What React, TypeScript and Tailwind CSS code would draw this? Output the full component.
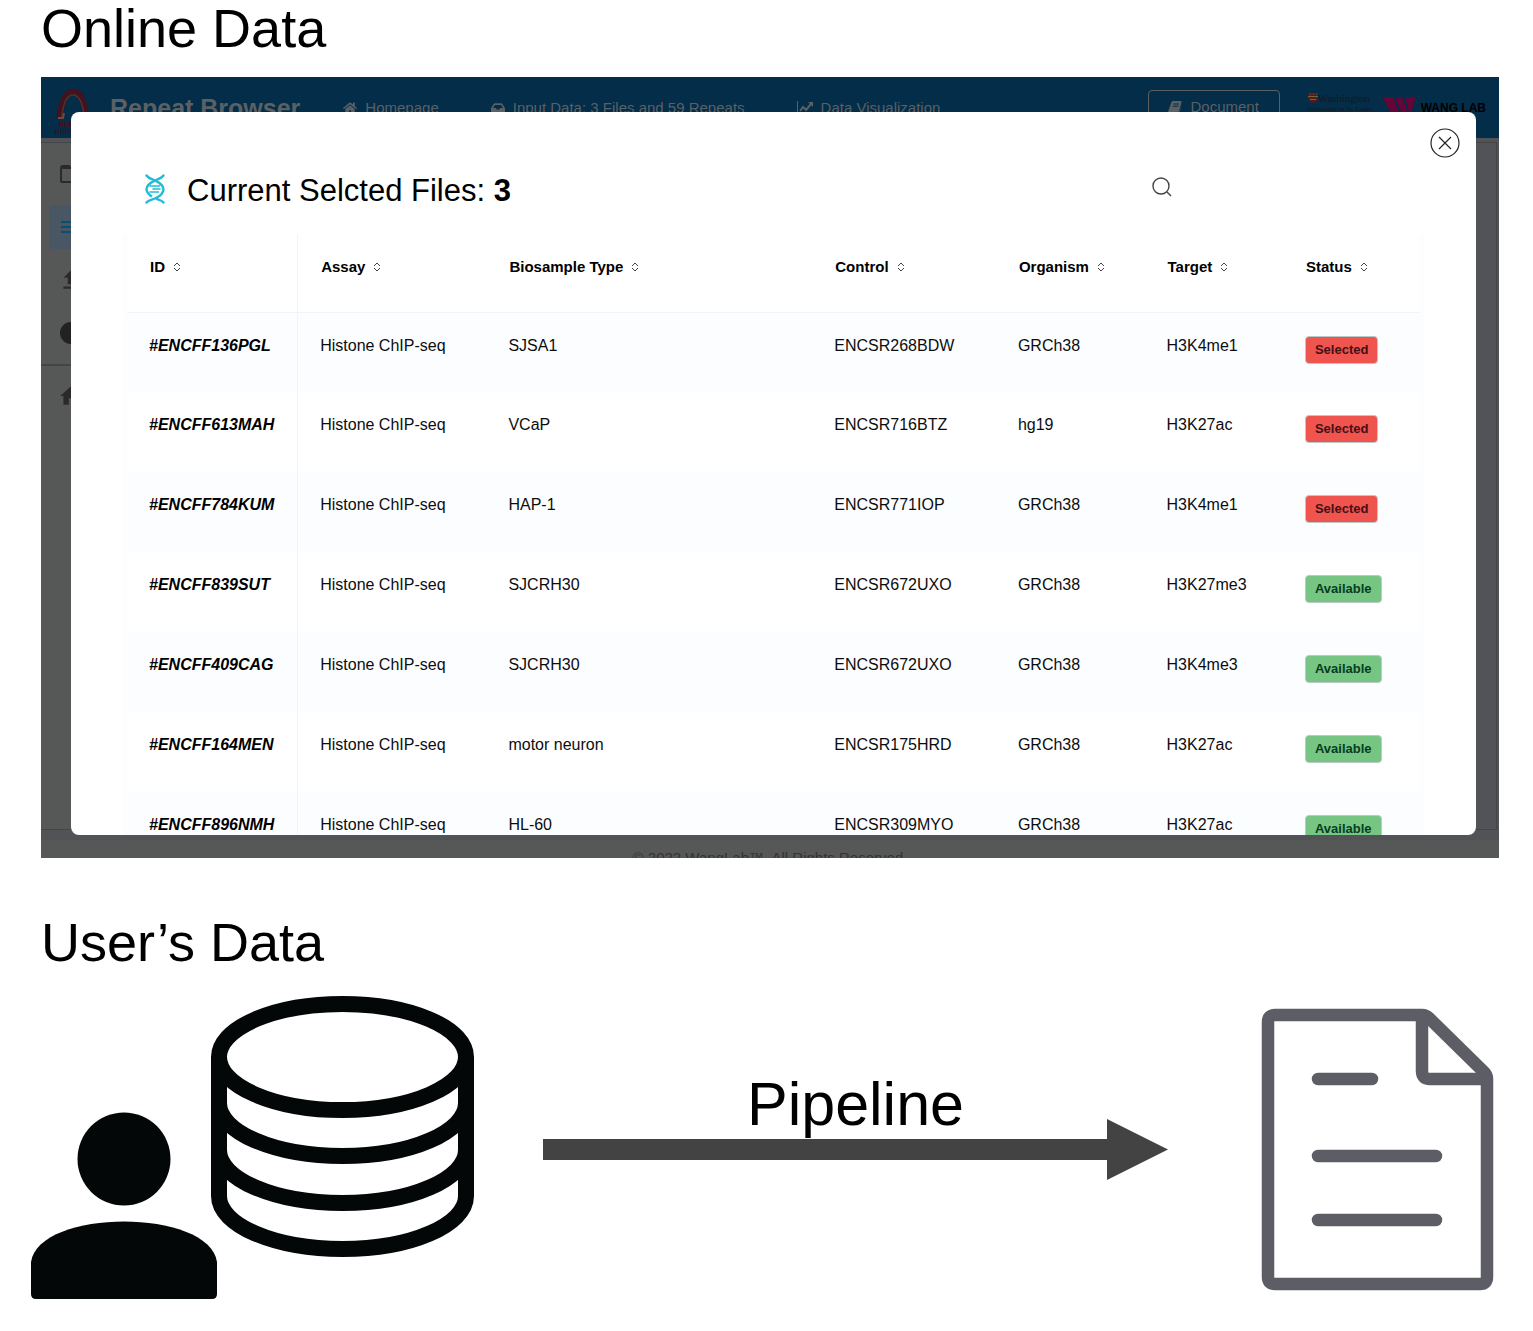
import type { ReactNode } from "react";
import { FaHome, FaInbox } from "react-icons/fa";
import { MdMenu, MdUpload, MdHome } from "react-icons/md";

type Row = {
  id: string;
  assay: string;
  biosample: string;
  control: string;
  organism: string;
  target: string;
  status: "Selected" | "Available";
};

const assay = "Histone ChIP-seq";

const rows: Row[] = [
  { id: "#ENCFF136PGL", assay, biosample: "SJSA1", control: "ENCSR268BDW", organism: "GRCh38", target: "H3K4me1", status: "Selected" },
  { id: "#ENCFF613MAH", assay, biosample: "VCaP", control: "ENCSR716BTZ", organism: "hg19", target: "H3K27ac", status: "Selected" },
  { id: "#ENCFF784KUM", assay, biosample: "HAP-1", control: "ENCSR771IOP", organism: "GRCh38", target: "H3K4me1", status: "Selected" },
  { id: "#ENCFF839SUT", assay, biosample: "SJCRH30", control: "ENCSR672UXO", organism: "GRCh38", target: "H3K27me3", status: "Available" },
  { id: "#ENCFF409CAG", assay, biosample: "SJCRH30", control: "ENCSR672UXO", organism: "GRCh38", target: "H3K4me3", status: "Available" },
  { id: "#ENCFF164MEN", assay, biosample: "motor neuron", control: "ENCSR175HRD", organism: "GRCh38", target: "H3K27ac", status: "Available" },
  { id: "#ENCFF896NMH", assay, biosample: "HL-60", control: "ENCSR309MYO", organism: "GRCh38", target: "H3K27ac", status: "Available" },
];

const columns = [
  { label: "ID", width: "w-[13.2%]" },
  { label: "Assay", width: "w-[14.6%]" },
  { label: "Biosample Type", width: "w-[25.2%]" },
  { label: "Control", width: "w-[14.2%]" },
  { label: "Organism", width: "w-[11.5%]" },
  { label: "Target", width: "w-[10.7%]" },
  { label: "Status", width: "w-[10.6%]" },
];

function SortIcon() {
  return (
    <svg viewBox="0 0 8 10" className="h-[10px] w-2" fill="none" stroke="#444" strokeWidth="1" aria-hidden="true">
      <path d="M1 4 4 1l3 3M1 6l3 3 3-3" />
    </svg>
  );
}

function DnaIcon() {
  return (
    <svg viewBox="0 0 20 30" className="h-[30px] w-5" fill="none" stroke="#22bcd8" strokeWidth="2.400" strokeLinecap="round" aria-hidden="true">
      <path d="M1.500 1.500c2 3 5.500 3.500 8.500 5C13 8 18 10 18.500 15c0 5-5 8-8.500 9.500C7 26 3.500 26 1.500 28.500" />
      <path d="M18.500 1.500c-2 3-5.500 3.500-8.500 5C7 8 2 10 1.500 15c0 3 2 5 4.500 7" />
      <path d="M12 25c3 1 5 1.500 6.500 3.500" />
      <path d="M5 12h9.500M8 15h7M5 18h8.500" strokeWidth="1.600" />
    </svg>
  );
}

function FolderIcon() {
  return (
    <svg viewBox="0 0 22 18" className="h-[18px] w-[22px]" fill="none" stroke="currentColor" strokeWidth="2" aria-hidden="true">
      <path d="M1 3q0-2 2-2h6l2 2h9q1 0 1 1v12q0 1-1 1H2q-1 0-1-1zM1 3h20" />
    </svg>
  );
}

function ChartIcon() {
  return (
    <svg viewBox="0 0 16 14" className="h-[14px] w-4" fill="none" stroke="currentColor" aria-hidden="true">
      <path d="M.5 0v13.500H16" />
      <path d="m3 10 3-4 3 3 5-6" strokeWidth="2" />
      <path d="M11 1h5v5z" fill="currentColor" stroke="none" />
    </svg>
  );
}

function BookIcon() {
  return (
    <svg viewBox="0 0 14 13" className="h-[13px] w-[14px]" aria-hidden="true">
      <path d="M5 0h7.500q1.500 0 1 1.500L11 10q-.5 1.200-1.500 1.200H2.500q-1 0-.5 1.300h8.500L14 3l-3 10H2q-2.500-.5-1.700-3L3.500 1Q4 0 5 0z" fill="currentColor" />
      <path d="M5.500 3h5.500M4.800 5.200h5.500" stroke="#032d48" />
    </svg>
  );
}

function ArchLogo() {
  return (
    <div className="flex w-10 flex-col items-center text-[7px] leading-[7px] font-bold text-[#42101e]">
      <svg viewBox="0 0 36 33" className="h-[33px] w-9" fill="none" aria-hidden="true">
        <path d="M4.500 31C6 14 11 3.500 18 3.500S30 14 31.500 31" stroke="#43121f" strokeWidth="6" />
        <path d="M6.500 30C8 16 12 7 18 7s10 9 11.500 23" stroke="#573029" strokeWidth="1.500" />
        <path d="M3 30h5l1-5" stroke="#6b4a3c" strokeWidth="2" />
      </svg>
      <span>REPEAT</span>
      <span>BROWSER</span>
    </div>
  );
}

function NavLink({ icon, children }: { icon: ReactNode; children: ReactNode }) {
  return (
    <a href="#" className="flex items-center gap-2 text-[15px] leading-5 whitespace-nowrap">
      {icon}
      {children}
    </a>
  );
}

function NavBar() {
  return (
    <header className="flex h-[61px] items-center bg-[#032d48] px-3 text-[#5b6064]">
      <div className="pt-2">
        <ArchLogo />
      </div>
      <span className="ml-[17px] text-[25px] leading-8 font-bold whitespace-nowrap">Repeat Browser</span>
      <nav className="ml-[43px] flex gap-[52px]">
        <NavLink icon={<FaHome size={14} />}>Homepage</NavLink>
        <NavLink icon={<FaInbox size={14} />}>Input Data: 3 Files and 59 Repeats</NavLink>
        <NavLink icon={<ChartIcon />}>Data Visualization</NavLink>
      </nav>
      <button type="button" className="ml-auto flex h-9 w-[132px] items-center justify-center gap-2 rounded border border-[#5b6064] text-[15px]">
        <BookIcon />
        Document
      </button>
      <div className="ml-7 flex items-center gap-[10px] text-black">
        <div className="flex w-[63px] flex-col pb-2 font-['Liberation_Serif',serif] text-[11px] leading-[11px] whitespace-nowrap text-[#15181b]">
          <span className="flex items-center">
            <svg viewBox="0 0 10 10" className="size-[10px]" aria-hidden="true">
              <path d="M0 0h10v5q0 4-5 5-5-1-5-5z" fill="#571a18" />
              <path d="M0 3.500h10M2 1h1M5 1h1M8 1h1M2 6.500h6" stroke="#6b6544" />
            </svg>
            Washington
          </span>
          <span className="text-[7px]">University in St. Louis</span>
        </div>
        <div className="flex items-center gap-1 pr-px text-xs font-bold whitespace-nowrap">
          <svg viewBox="0 0 34 22" className="h-[22px] w-9" fill="#650436" aria-hidden="true">
            <path d="M0 0h11l9 22h-7zM13 0h7l7 19-2 3h-3zM23 0h11l-6 19z" />
          </svg>
          WANG LAB
        </div>
      </div>
    </header>
  );
}

function Sidebar() {
  return (
    <aside className="flex w-[60px] flex-col gap-[9px] bg-[#565857] pt-[9px] text-[#2a2a2a]">
      <a href="#" aria-label="Folder" className="ml-2 flex h-11 items-center pl-[11px]"><FolderIcon /></a>
      <a href="#" aria-label="Files" className="ml-2 flex h-11 items-center rounded bg-[#495764] pl-[9px] text-[#0c4d73]"><MdMenu size={24} /></a>
      <a href="#" aria-label="Upload" className="ml-2 flex h-11 items-center pl-[9px]"><MdUpload size={26} /></a>
      <a href="#" aria-label="Info" className="ml-2 flex h-11 items-center pl-[11px]"><span className="size-[22px] rounded-full bg-[#222]" /></a>
      <div className="border-t-2 border-[#454545] pl-[17px]">
        <a href="#" aria-label="Home" className="flex h-[60px] items-center"><MdHome size={26} /></a>
      </div>
    </aside>
  );
}

function Backdrop() {
  return (
    <div className="absolute inset-0 flex flex-col overflow-hidden bg-[#525356]">
      <NavBar />
      <div className="mt-1 mr-[2px] flex grow border-t border-r border-b border-[#444548]">
        <Sidebar />
      </div>
      <footer className="mt-[10px] h-[18px] overflow-hidden bg-[#565857] pt-2 text-center text-[15px] leading-5 text-[#333]">
        © 2022 WangLab™. All Rights Reserved.
      </footer>
    </div>
  );
}

function FilesTable() {
  return (
    <div className="mx-[52px] bg-[#fcfdff] px-1">
      <table className="w-full table-fixed border-collapse bg-white text-left text-base leading-5 text-[#0c0d0e]">
        <thead>
          <tr className="h-[78px] border-b border-[#f2f4fb]">
            {columns.map((c, i) => (
              <th key={c.label} scope="col" className={`${c.width} ${i === 0 ? "border-r border-[#f2f4fb]" : ""} pb-3 pl-[23px] align-middle text-[15px] font-bold whitespace-nowrap text-black`}>
                <button type="button" className="flex items-center gap-2">
                  {c.label}
                  <SortIcon />
                </button>
              </th>
            ))}
          </tr>
        </thead>
        <tbody>
          {rows.map((r) => (
            <tr key={r.id} className="h-20 align-top odd:bg-[#fcfdff] *:pt-[23px] *:pl-[22px]">
              <th scope="row" className="border-r border-[#f2f4fb] text-left font-bold text-black italic">{r.id}</th>
              <td>{r.assay}</td>
              <td>{r.biosample}</td>
              <td>{r.control}</td>
              <td>{r.organism}</td>
              <td>{r.target}</td>
              <td>
                <span className={`${r.status === "Selected" ? "bg-[#f0544f] text-[#431015]" : "bg-[#76c583] text-[#063d22]"} inline-block rounded border border-[#b9c9c5] px-[9px] text-[13px] leading-[26px] font-bold`}>
                  {r.status}
                </span>
              </td>
            </tr>
          ))}
        </tbody>
      </table>
    </div>
  );
}

function FilesDialog() {
  return (
    <div role="dialog" aria-labelledby="files-title" className="relative mt-[35px] mr-[23px] mb-[23px] ml-[30px] h-[723px] overflow-hidden rounded-lg bg-white">
      <button type="button" aria-label="Close" className="absolute top-4 right-4">
        <svg viewBox="0 0 30 30" className="size-[30px]" fill="none" stroke="#222" strokeWidth="1.200" aria-hidden="true">
          <circle cx="15" cy="15" r="14" />
          <path d="m9 9 12 12M21 9 9 21" />
        </svg>
      </button>
      <div className="flex h-[122px] items-center pt-8 pr-[304px] pl-[74px]">
        <DnaIcon />
        <h2 id="files-title" className="ml-[22px] pt-1 text-[31px] leading-9 whitespace-nowrap text-black">
          Current Selcted Files: <span className="font-bold">3</span>
        </h2>
        <button type="button" aria-label="Search" className="ml-auto pb-1">
          <svg viewBox="0 0 20 20" className="size-5" fill="none" stroke="#444" strokeWidth="1.400" aria-hidden="true">
            <circle cx="9" cy="9" r="8" />
            <path d="m15 15 4 4" />
          </svg>
        </button>
      </div>
      <FilesTable />
    </div>
  );
}

function UserDatabase() {
  return (
    <svg viewBox="30 995 446 306" className="w-[446px] shrink-0" role="img" aria-label="User database">
      <circle cx="124" cy="1159" r="46.500" fill="#040707" />
      <path d="M31 1262c8-54 178-54 186 0v32q0 5-5 5H36q-5 0-5-5z" fill="#040707" />
      <g fill="none" stroke="#040707" strokeWidth="16">
        <ellipse cx="342.500" cy="1057" rx="123.500" ry="53" />
        <path d="M219 1057v139c0 29 55 53 123.500 53S466 1225 466 1196v-139" />
        <path d="M219 1103c0 29 55 53 123.500 53S466 1132 466 1103" />
        <path d="M219 1150c0 29 55 53 123.500 53S466 1179 466 1150" />
      </g>
    </svg>
  );
}

function DocumentDrawing() {
  return (
    <svg viewBox="1261 1008 233 283" className="mt-[13px] w-[233px] shrink-0" fill="none" stroke="#5d5d66" strokeWidth="12.500" role="img" aria-label="Document">
      <path d="M1275 1015h147q4 0 7 3l55 54q3 3 3 7v198q0 7-7 7h-205q-7 0-7-7v-255q0-7 7-7z" />
      <path d="M1422 1016v55q0 8 8 8h55" />
      <path d="M1318 1079h54M1318 1156h118M1318 1220h118" strokeLinecap="round" />
    </svg>
  );
}

function PipelineArrow() {
  return (
    <div className="mt-[73px] flex grow flex-col">
      <p className="text-center text-[61px] leading-[72px] text-black">Pipeline</p>
      <div className="-mt-[21px] flex items-center">
        <div className="h-[21px] grow bg-[#434343]" />
        <svg viewBox="0 0 61 61" className="size-[61px]" aria-hidden="true">
          <path d="M0 0l61 30.500L0 61z" fill="#434343" />
        </svg>
      </div>
    </div>
  );
}

export default function App() {
  return (
    <main className="bg-white pb-[30px] font-['Liberation_Sans',Arial,sans-serif]">
      <h1 className="pl-[41px] text-[54px] leading-[56px] text-black">Online Data</h1>
      <section className="relative mt-[21px] mr-[34px] ml-[41px] flow-root" aria-label="Online data">
        <Backdrop />
        <FilesDialog />
      </section>
      <h1 className="mt-14 pl-[41px] text-[54px] leading-[56px] text-black">User’s Data</h1>
      <section className="mt-[25px] flex items-start pr-[39px] pl-[30px]" aria-label="User data pipeline">
        <UserDatabase />
        <div className="mr-[93px] ml-[67px] flex grow">
          <PipelineArrow />
        </div>
        <DocumentDrawing />
      </section>
    </main>
  );
}
